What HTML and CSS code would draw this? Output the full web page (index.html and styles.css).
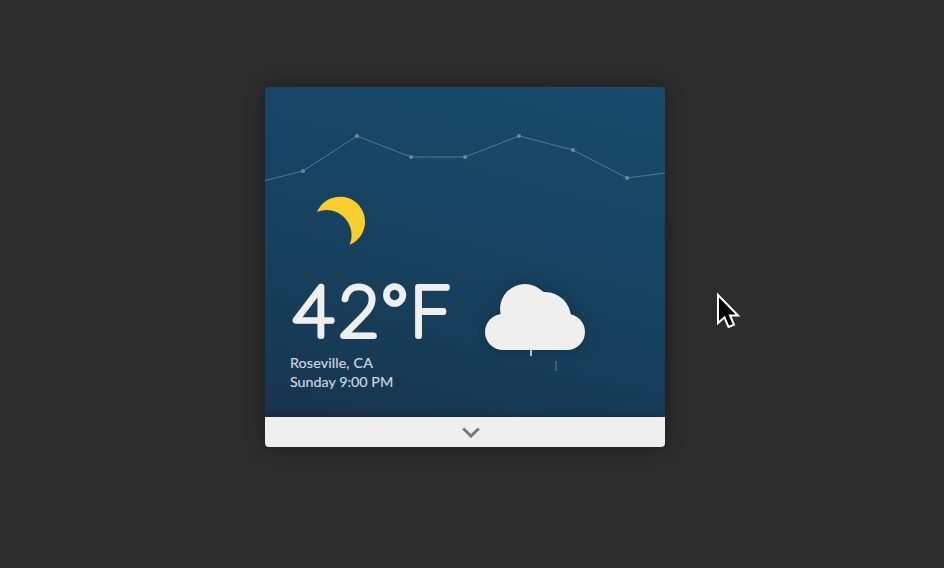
FILE: index.html
```html
<!DOCTYPE html>
<html lang="en">
<head>
<meta charset="utf-8">
<title>Weather</title>
<link rel="stylesheet" href="styles.css">
</head>
<body>
<main class="weather-card">
  <section class="sky">
    <svg class="chart" viewBox="0 0 400 110" aria-hidden="true">
      <path class="chart-line" d="M0 93.5L38 84L92 49L146 70H200L254 49L308 63L362 91L400 86"/>
      <g class="chart-points">
        <circle cx="38" cy="84" r="2"/><circle cx="92" cy="49" r="2"/><circle cx="146" cy="70" r="2"/><circle cx="200" cy="70" r="2"/><circle cx="254" cy="49" r="2"/><circle cx="308" cy="63" r="2"/><circle cx="362" cy="91" r="2"/>
      </g>
    </svg>
    <svg class="moon" viewBox="0 0 50 50" aria-hidden="true">
      <path class="moon-shade" d="M1.7 15.7A24.7 24.7 0 1 1 35 48.6A25 25 0 0 0 1.7 15.7Z" transform="translate(.6 -.4)"/>
      <path class="moon-light" d="M1 15A25 25 0 1 1 33.6 47.8A25 25 0 0 0 1 15Z"/>
    </svg>
    <div class="conditions">
      <div class="reading">
        <svg class="temperature" viewBox="0 0 185 90">
          <text y="68" x="3.5 48.5 92 120">42<tspan class="degree" dy="-5.5">°</tspan><tspan dy="5.5">F</tspan></text>
        </svg>
        <div class="place">Roseville, CA</div>
        <div class="time">Sunday 9:00 PM</div>
      </div>
      <svg class="cloud" viewBox="0 0 120 110" aria-hidden="true">
        <g class="cloud-body">
          <rect x="10" y="40" width="100" height="36" rx="18"/>
          <circle cx="50" cy="35" r="25"/>
          <circle cx="70" cy="44" r="26"/>
        </g>
        <path class="drop" d="M56 76V82"/>
        <path class="drop drop-faint" d="M81 87V97"/>
      </svg>
    </div>
  </section>
  <div class="expand">
    <svg class="chevron" viewBox="0 0 18 12"><path d="M1.2 2.5L9 10L16.8 2.5"/></svg>
  </div>
</main>
<svg class="cursor" viewBox="0 0 26 38" aria-hidden="true"><path d="M2 3V31L8.5 25.3L12.5 35L18 32.8L14 23.5H22Z"/></svg>
</body>
</html>
```

FILE: styles.css
```css
* { box-sizing: border-box; }
body {
  margin: 0;
  height: 568px;
  padding: 87px 0 0 265px;
  background: #2d2d2d;
  overflow: hidden;
}
svg { display: block; }
.weather-card {
  width: 400px;
  height: 360px;
  border-radius: 4px;
  overflow: hidden;
  box-shadow: 0 0 20px rgba(0, 0, 0, .4);
}
.sky {
  height: 330px;
  background: linear-gradient(15deg, #17344e 0%, #173f5c 35%, #184b6c 100%);
}
.chart { width: 400px; height: 110px; }
.chart-line { fill: none; stroke: #fff; stroke-opacity: .27; stroke-width: 1; }
.chart-points { fill: #6f889d; }
.moon { width: 50px; height: 50px; margin-left: 51px; overflow: visible; }
.moon-shade { fill: #383e31; }
.moon-light { fill: #f9cf2f; }
.conditions { display: flex; padding-left: 25px; }
.reading {
  width: 185px;
  padding-top: 21px;
  color: #ccd6df;
  font: 400 14.3px/19px Lato, sans-serif;
  -webkit-text-stroke: .2px #ccd6df;
}
.place { letter-spacing: .12px; }
.temperature { width: 185px; height: 90px; margin-bottom: -5px; overflow: visible; }
.temperature text {
  font: 100 70px/1 Lato, sans-serif;
  fill: #efefef;
  stroke: #efefef;
  stroke-width: 6px;
  stroke-linejoin: round;
}
.temperature .degree { font-size: 61px; }
.cloud { width: 120px; height: 110px; margin-top: 27px; overflow: visible; }
.cloud-body { fill: #efefef; filter: drop-shadow(0 0 7px rgba(0, 0, 0, .22)); }
.drop { stroke: #c9d1d9; stroke-width: 1.8; }
.drop-faint { stroke: #426581; }
.expand {
  height: 30px;
  display: flex;
  align-items: center;
  justify-content: center;
  padding-left: 12px;
  background: #efefef;
  box-shadow: 0 0 8px rgba(0, 0, 0, .35);
}
.chevron { width: 18px; height: 12px; }
.chevron path { fill: none; stroke: #777; stroke-width: 3; }
.cursor { position: absolute; left: 716px; top: 292px; width: 26px; height: 38px; }
.cursor path { fill: #000; stroke: #fff; stroke-width: 2; }
```
